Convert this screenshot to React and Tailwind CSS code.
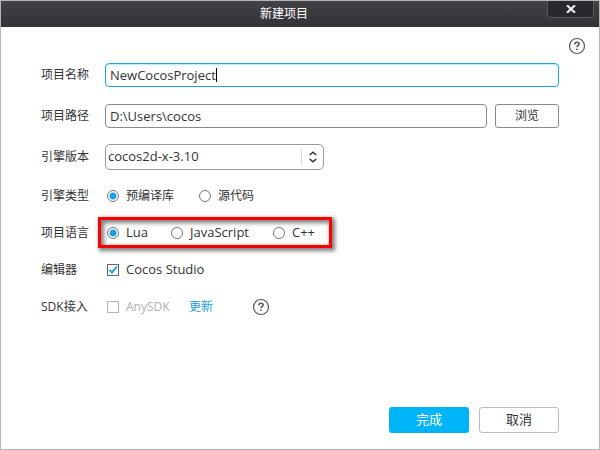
import { useState } from "react";

function HelpButton({ label }) {
  return (
    <button type="button" aria-label={label} className="block size-4 shrink-0 text-[#55555f]">
      <svg viewBox="0 0 16 16" className="size-4 overflow-visible" fill="none" stroke="currentColor">
        <circle cx="8" cy="8" r="7.5" strokeWidth="1.2" />
        <path d="M5.8 6.5V6.2C5.8 5 6.7 4.3 8 4.3S10.2 5 10.2 6.1C10.2 7.4 8 7.6 8 9.3" strokeWidth="1.5" />
        <path d="M8 10.5V12" strokeWidth="1.5" />
      </svg>
    </button>
  );
}

function Row({ label, htmlFor, className = "", children }) {
  return (
    <div className={`flex items-center ${className}`}>
      <label htmlFor={htmlFor} className="w-16 shrink-0 text-xs">
        {label}
      </label>
      {children}
    </div>
  );
}

function Radio({ name, text, checked, onChange, className = "" }) {
  return (
    <label className={`flex items-center gap-[7px] ${className}`}>
      <input
        type="radio"
        name={name}
        checked={checked}
        onChange={onChange}
        className="size-3 shrink-0 appearance-none rounded-full border border-[#77777b] bg-white checked:bg-[radial-gradient(circle,#1ba1e2_3px,#ffffff_4px)]"
      />
      {text}
    </label>
  );
}

function Checkbox({ id, text, checked, disabled, onChange, className = "" }) {
  return (
    <label className={`flex items-center gap-[7px] ${disabled ? "text-[#b0b0b0]" : ""} ${className}`}>
      <span className="relative block size-3 shrink-0">
        <input
          id={id}
          type="checkbox"
          checked={checked}
          disabled={disabled}
          onChange={onChange}
          className="block size-3 appearance-none border border-[#66666a] bg-white disabled:border-[#b4b4b4]"
        />
        {checked && (
          <svg viewBox="0 0 12 12" className="pointer-events-none absolute inset-0 size-3" fill="none" stroke="#1ba1e2" strokeWidth="2">
            <path d="M2.5 5.8L5 8.7L9.8 2.5" />
          </svg>
        )}
      </span>
      {text}
    </label>
  );
}

export default function App() {
  const [name, setName] = useState("NewCocosProject");
  const [path, setPath] = useState("D:\\Users\\cocos");
  const [kind, setKind] = useState("prebuilt");
  const [language, setLanguage] = useState("Lua");
  const [studio, setStudio] = useState(true);

  return (
    <div className="flex min-h-screen flex-col border border-[#b6b6b6] bg-white font-['Open_Sans','Noto_Sans_CJK_SC',sans-serif] text-xs text-[#333333]">
      <header className="relative flex h-[26px] items-center justify-center bg-linear-to-b from-[#424246] to-[#333338] pr-8 text-white">
        <h1 className="text-xs">新建项目</h1>
        <button
          type="button"
          aria-label="关闭"
          className="absolute top-0 right-[5px] flex h-[17px] w-[47px] items-center justify-center rounded-b-sm border border-t-0 border-[#57575c] bg-[#29292d]"
        >
          <svg viewBox="0 0 10 8" className="h-2 w-[10px]" stroke="#f0f0f0" strokeWidth="2.2" fill="none">
            <path d="M1 0.3L9 7.7M9 0.3L1 7.7" />
          </svg>
        </button>
      </header>

      <div className="flex justify-end pt-[11px] pr-[14px]">
        <HelpButton label="帮助" />
      </div>

      <main className="flex flex-1 flex-col pt-[9px] pr-10 pb-4 pl-10">
        <Row label="项目名称" htmlFor="name">
          <div className="relative flex-1 text-[13px]">
            <input
              id="name"
              value={name}
              onChange={(e) => setName(e.target.value)}
              className="block h-6 w-full rounded-[4px] border border-[#1ba9e1] px-1 shadow-[inset_0_1px_1px_#b5ecfb] outline-none"
            />
            <span aria-hidden="true" className="pointer-events-none absolute top-[5px] left-[111px] h-[14px] w-px bg-black" />
          </div>
        </Row>

        <Row label="项目路径" htmlFor="path" className="mt-[17px]">
          <input
            id="path"
            value={path}
            onChange={(e) => setPath(e.target.value)}
            className="h-6 min-w-0 flex-1 rounded-[4px] border border-[#8a8a8e] px-1 text-[13px] outline-none"
          />
          <button type="button" className="ml-2 h-6 w-16 rounded-[3px] border border-[#8a8a8e] text-xs">
            浏览
          </button>
        </Row>

        <Row label="引擎版本" htmlFor="version" className="mt-4">
          <div className="relative w-[219px]">
            <select
              id="version"
              className="block h-[26px] w-full appearance-none rounded-[5px] border border-[#9a9aa6] bg-white pr-6 pl-[2px] text-[13px] outline-none"
            >
              <option>cocos2d-x-3.10</option>
            </select>
            <span className="pointer-events-none absolute inset-y-[5px] right-0 flex w-[23px] items-center justify-center border-l border-[#d8d8dc]">
              <svg viewBox="0 0 8 12" className="h-3 w-2" fill="none" stroke="#333333" strokeWidth="1.6">
                <path d="M0.7 4L4 1.2L7.3 4M0.7 8L4 10.8L7.3 8" />
              </svg>
            </span>
          </div>
        </Row>

        <Row label="引擎类型" className="mt-[7px] h-[37px]">
          <div role="radiogroup" aria-label="引擎类型" className="flex pl-[2px] leading-[17px]">
            <Radio name="kind" text="预编译库" className="w-[92px]" checked={kind === "prebuilt"} onChange={() => setKind("prebuilt")} />
            <Radio name="kind" text="源代码" checked={kind === "source"} onChange={() => setKind("source")} />
          </div>
        </Row>

        <Row label="项目语言" className="h-[37px]">
          <div role="radiogroup" aria-label="项目语言" className="relative flex pl-[2px] text-[13px] leading-[17px]">
            <Radio name="language" text="Lua" className="w-16" checked={language === "Lua"} onChange={() => setLanguage("Lua")} />
            <Radio name="language" text="JavaScript" className="w-[102px]" checked={language === "JavaScript"} onChange={() => setLanguage("JavaScript")} />
            <Radio name="language" text="C++" checked={language === "C++"} onChange={() => setLanguage("C++")} />
            <span
              aria-hidden="true"
              className="pointer-events-none absolute -inset-y-[7px] -left-[7px] w-[234px] border-3 border-[#ff0000] shadow-[2px_2px_4px_1px_#00000080,inset_2px_2px_4px_1px_#00000080]"
            />
          </div>
        </Row>

        <Row label="编辑器" htmlFor="studio" className="h-[37px]">
          <Checkbox id="studio" text="Cocos Studio" className="pl-[2px] text-[13px] leading-[17px]" checked={studio} onChange={() => setStudio(!studio)} />
        </Row>

        <Row label="SDK接入" htmlFor="sdk" className="h-[37px]">
          <Checkbox id="sdk" text="AnySDK" disabled checked={false} className="w-[84px] pl-[2px] leading-[17px]" />
          <a href="#update" className="w-16 text-xs text-[#1b9fe5]">
            更新
          </a>
          <HelpButton label="SDK帮助" />
        </Row>

        <div className="mt-auto flex justify-end gap-[10px]">
          <button type="button" className="h-[26px] w-20 rounded-[3px] bg-[#00b4f8] text-[13px] text-white">
            完成
          </button>
          <button type="button" className="h-[26px] w-20 rounded-[3px] border border-[#bcbcbc] text-[13px]">
            取消
          </button>
        </div>
      </main>
    </div>
  );
}
